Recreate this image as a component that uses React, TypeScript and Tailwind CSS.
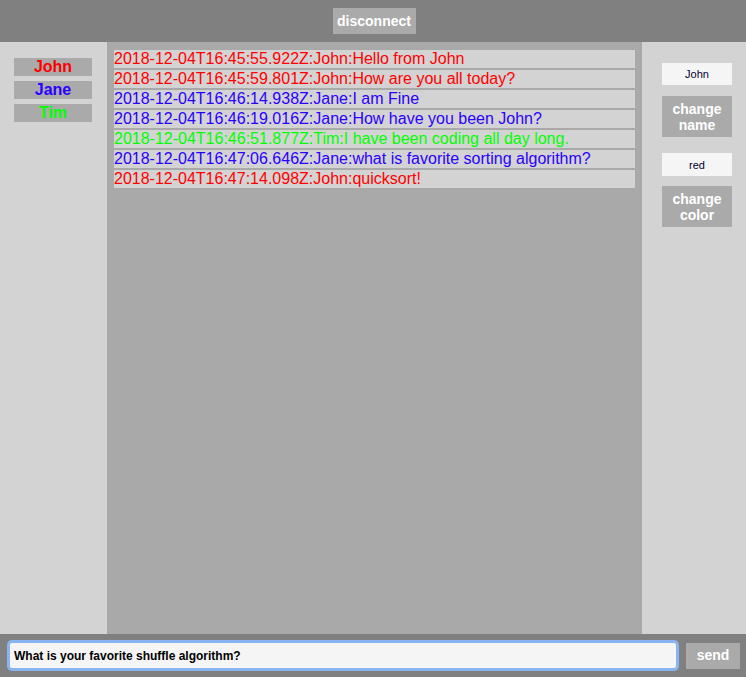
import React from "react";

const users = [
  { name: "John", color: "text-[#ff0000]" },
  { name: "Jane", color: "text-[#2a00ff]" },
  { name: "Tim", color: "text-[#00ff00]" },
];

const messages = [
  { text: "2018-12-04T16:45:55.922Z:John:Hello from John", color: "text-[#ff0000]" },
  { text: "2018-12-04T16:45:59.801Z:John:How are you all today?", color: "text-[#ff0000]" },
  { text: "2018-12-04T16:46:14.938Z:Jane:I am Fine", color: "text-[#2a00ff]" },
  { text: "2018-12-04T16:46:19.016Z:Jane:How have you been John?", color: "text-[#2a00ff]" },
  { text: "2018-12-04T16:46:51.877Z:Tim:I have been coding all day long.", color: "text-[#00ff00]" },
  { text: "2018-12-04T16:47:06.646Z:Jane:what is favorite sorting algorithm?", color: "text-[#2a00ff]" },
  { text: "2018-12-04T16:47:14.098Z:John:quicksort!", color: "text-[#ff0000]" },
];

export default function App() {
  return (
    <div className="flex h-[677px] w-[746px] flex-col font-['Liberation_Sans',Arial,sans-serif]">
      {/* Header */}
      <div className="flex h-[42px] items-center justify-center bg-[#808080]">
        <button className="ml-[2px] h-[26px] w-[83px] bg-[#aaaaaa] text-[14px] font-bold text-white">
          disconnect
        </button>
      </div>

      {/* Body */}
      <div className="flex flex-1">
        {/* Users */}
        <div className="flex w-[107px] flex-col items-start gap-[5px] bg-[#d3d3d3] pl-[14px] pt-[16px]">
          {users.map((u) => (
            <div
              key={u.name}
              className={`h-[18px] w-[78px] bg-[#aaaaaa] text-center text-[16px] font-bold leading-[18px] ${u.color}`}
            >
              {u.name}
            </div>
          ))}
        </div>

        {/* Messages */}
        <div className="flex flex-1 flex-col gap-[2px] bg-[#a9a9a9] px-[7px] pt-[8px]">
          {messages.map((m, i) => (
            <div
              key={i}
              className={`h-[18px] bg-[#d3d3d3] text-[16px] leading-[18px] ${m.color}`}
            >
              {m.text}
            </div>
          ))}
        </div>

        {/* Settings */}
        <div className="flex w-[104px] flex-col bg-[#d3d3d3] pl-[20px] pt-[21px]">
          <input
            defaultValue="John"
            className="h-[22px] w-[70px] bg-[#f5f5f5] text-center text-[11px] text-[#000033] outline-none"
          />
          <button className="mt-[11px] h-[41px] w-[70px] bg-[#aaaaaa] text-[14px] font-bold leading-[16px] text-white">
            change
            <br />
            name
          </button>
          <input
            defaultValue="red"
            className="mt-[16px] h-[23px] w-[70px] bg-[#f5f5f5] text-center text-[11px] text-[#000033] outline-none"
          />
          <button className="mt-[10px] h-[41px] w-[70px] bg-[#aaaaaa] text-[14px] font-bold leading-[16px] text-white">
            change
            <br />
            color
          </button>
        </div>
      </div>

      {/* Footer */}
      <div className="flex h-[43px] items-center gap-[10px] bg-[#808080] pl-[10px]">
        <input
          defaultValue="What is your favorite shuffle algorithm?"
          className="h-[25px] w-[666px] shrink-0 rounded-[2px] bg-[#f5f5f5] px-[4px] text-[12px] font-bold text-black outline-none ring-[3px] ring-[#8ab4f0]"
        />
        <button className="h-[26px] w-[54px] shrink-0 bg-[#aaaaaa] text-[14px] font-bold text-white">
          send
        </button>
      </div>
    </div>
  );
}
